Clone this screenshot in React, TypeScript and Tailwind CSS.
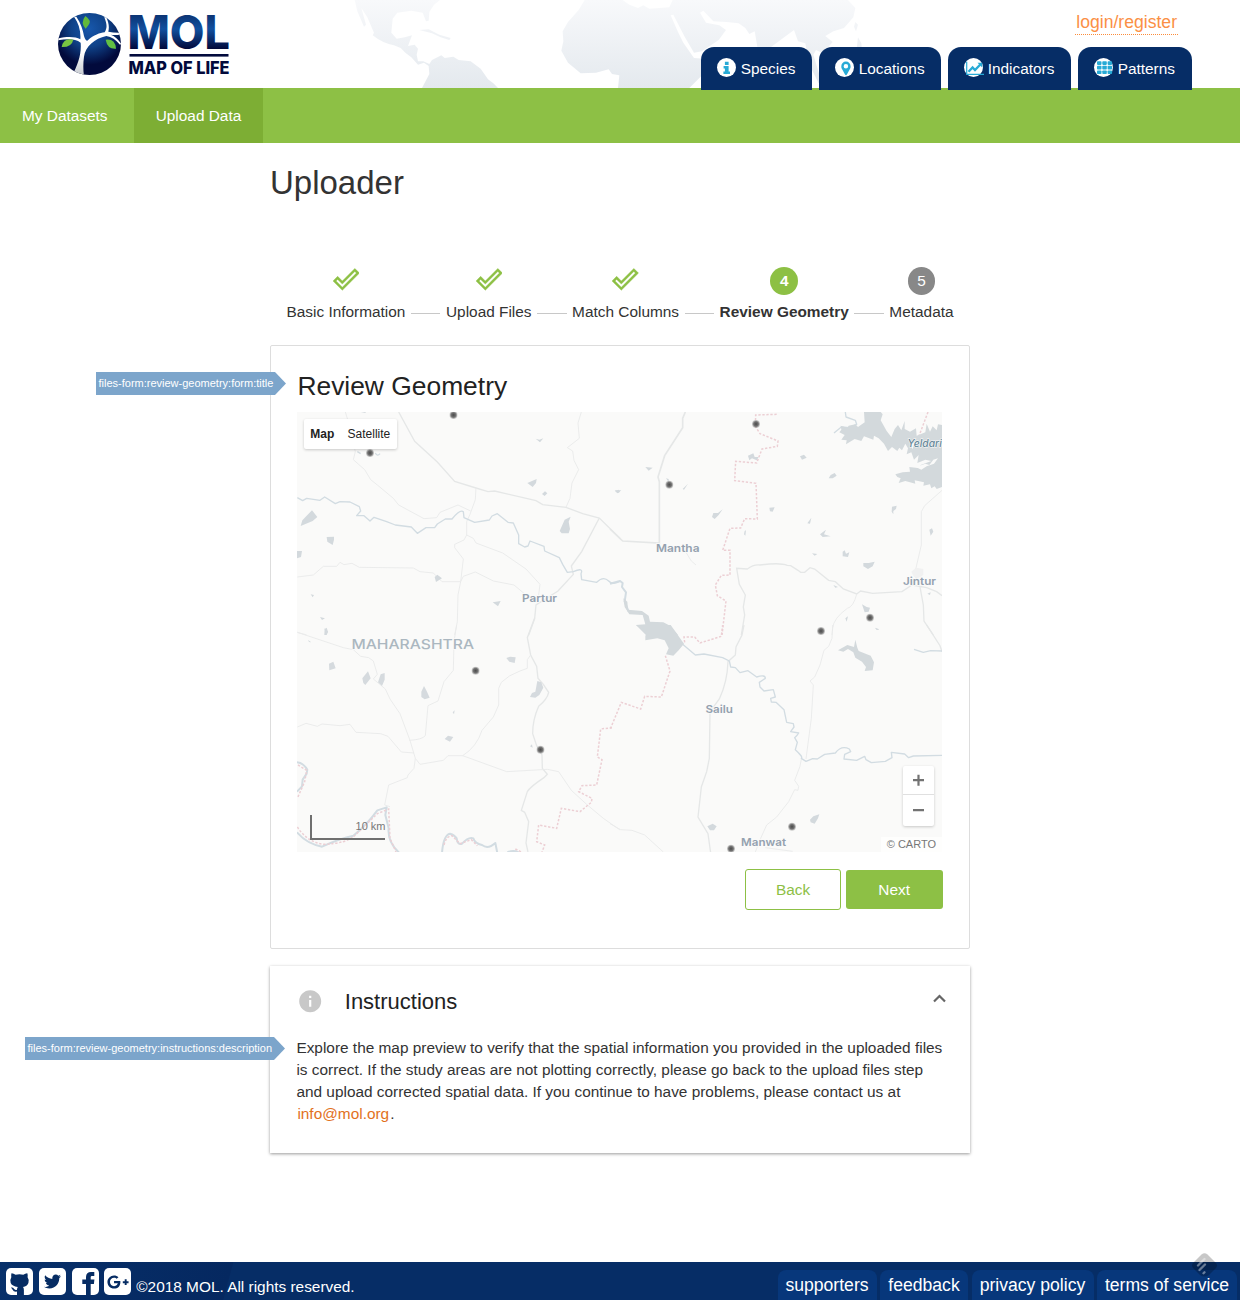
import React from "react";
import { FaTwitter, FaGooglePlusG } from "react-icons/fa";
import { MdInfo } from "react-icons/md";

function Logo() {
  return (
    <svg className="block h-[86px] w-[186px] overflow-visible" viewBox="54 0 186 86">
      <defs>
        <radialGradient id="globe" cx="0.5" cy="0.25" r="0.65">
          <stop offset="0" stopColor="#1757ab" />
          <stop offset="0.45" stopColor="#0f4288" />
          <stop offset="0.9" stopColor="#020a3c" />
        </radialGradient>
        <linearGradient id="letters" x1="0" y1="0" x2="0" y2="1">
          <stop offset="0.2" stopColor="#0c3474" />
          <stop offset="0.45" stopColor="#11509f" />
          <stop offset="0.8" stopColor="#020a3c" />
        </linearGradient>
        <linearGradient id="trunk" x1="0" y1="0" x2="0" y2="1">
          <stop offset="0.6" stopColor="#fff" />
          <stop offset="1" stopColor="#c4c8ce" />
        </linearGradient>
        <clipPath id="globeClip">
          <ellipse cx="89.5" cy="44" rx="31.5" ry="31" />
        </clipPath>
      </defs>
      <ellipse cx="89.5" cy="44" rx="31.5" ry="31" fill="url(#globe)" />
      <g clipPath="url(#globeClip)">
        <g transform="scale(.33333)">
          <path
            d="M217 226 C232 196 245 165 242 128 C226 116 202 116 172 121 L172 116 C202 109 226 110 241 118 C243 92 236 70 222 50 L229 50 C243 70 249 90 252 108 Q256 122 262 122 C282 104 300 99 314 97 C323 82 320 70 313 52 L318 50 C327 68 328 82 325 95 Q342 99 364 98 L364 103 Q344 106 332 104 Q350 110 364 132 L360 134 Q342 112 319 108 C284 115 256 140 252 170 Q248 200 252 228 Z"
            fill="url(#trunk)"
          />
          <path d="M257 86 Q240 68 256 48 Q277 62 265 76 Z" fill="#62b93b" />
          <path d="M185 141 Q190 112 220 119 Q215 142 185 141Z" fill="#78c442" />
          <path d="M348 146 Q322 148 317 119 Q346 115 348 146Z" fill="#62c043" />
        </g>
      </g>
      <text x="127.5" y="48.800" textLength="102.500" lengthAdjust="spacingAndGlyphs" fontFamily="Inter" fontWeight="800" fontSize="46.500" fill="url(#letters)">MOL</text>
      <rect x="129.500" y="54" width="99" height="2.600" fill="#020a3c" />
      <text x="128.500" y="73.800" textLength="101" lengthAdjust="spacingAndGlyphs" fontFamily="Inter" fontWeight="800" fontSize="17" fill="#020a3c">MAP OF LIFE</text>
    </svg>
  );
}

function WorldBackdrop() {
  return (
    <svg className="absolute left-[350px] top-0 h-[88px] w-[520px]" viewBox="0 0 1560 264">
      <defs>
        <linearGradient id="land" gradientUnits="userSpaceOnUse" x1="0" y1="0" x2="0" y2="264">
          <stop offset="0" stopColor="#f8f9fb" />
          <stop offset="1" stopColor="#e4e9ee" />
        </linearGradient>
      </defs>
      <g fill="url(#land)">
        <path d="M14 0 L22 34 L42 80 L48 74 L34 24 L52 52 L72 98 L68 106 Q98 130 132 136 L152 144 L166 158 L184 172 L204 194 L222 188 L236 198 L238 222 L216 264 L444 264 L430 250 L414 238 L392 206 L362 184 L326 180 L310 170 L284 174 L274 166 L246 180 L238 192 L220 184 L204 184 L200 164 L204 146 L194 134 L174 138 L186 106 L164 112 L140 116 L124 98 L128 56 L142 38 L184 32 L218 38 L228 64 L236 62 L238 36 L252 14 L270 0Z" />
        <path d="M208 90 L236 88 L268 104 L302 114 L298 120 L272 112 L246 100Z" />
        <path d="M704 0 L686 30 L654 66 L638 94 L640 124 L634 152 L654 188 L692 220 L738 218 L776 208 L786 222 L808 226 L804 264 L1018 264 L1060 222 L1064 176 L1032 174 L1000 128 L984 96 L962 46 L970 44 L1004 110 L1032 158 L1056 154 L1106 120 L1128 90 L1108 76 L1068 68 L1050 38 L1060 32 L1090 64 L1130 66 L1166 70 L1186 84 L1198 102 L1214 94 L1222 140 L1262 142 L1332 90 L1344 124 L1366 130 L1376 190 L1406 250 L1414 244 L1390 164 L1398 150 L1418 160 L1448 126 L1426 108 L1450 94 L1482 84 L1510 52 L1516 24 L1494 0 L968 0 L958 22 L898 26 L880 16 L864 24 L838 14 L818 0Z" />
        <path d="M1516 66 L1524 74 L1518 94 L1512 80Z M1524 112 L1534 130 L1536 150 L1520 146Z" />
      </g>
    </svg>
  );
}

const tabs = [
  { label: "Species", cls: "w-[111px]" },
  { label: "Locations", cls: "w-[122px]" },
  { label: "Indicators", cls: "w-[123px]" },
  { label: "Patterns", cls: "w-[114px]" },
];

function TabIcon({ kind }: { kind: string }) {
  return (
    <svg className="mr-[4.700px] block h-[20px] w-[19px] overflow-visible" viewBox="0 0 19 20">
      <circle cx="9.500" cy="9.500" r="9.500" fill="#fff" />
      {kind === "Species" && (
        <path fill="#27aad6" d="M7.900 3.700h3.700v3.200H7.900zM6.600 7.900h5v5.700h1.400v2.500H6.400v-2.500h1.500v-3.200H6.600z" />
      )}
      {kind === "Locations" && (
        <path
          fill="#27aad6"
          fillRule="evenodd"
          d="M10.900 3.600a4.700 4.700 0 0 1 4.700 4.800c0 1.200-.3 1.800-.7 2.600l-3 5.600q-.9 1.200-1.900 0l-3-5.600c-.4-.8-.7-1.400-.7-2.600a4.600 4.700 0 0 1 4.600-4.800zM10.900 6.100a2.200 2.200 0 1 0 0 4.500 2.200 2.200 0 1 0 0-4.500z"
        />
      )}
      {kind === "Indicators" && (
        <g fill="none" stroke="#27aad6">
          <path d="M2.700 3.700V16.400H20" strokeWidth="1.200" />
          <path d="M4.500 13.800L8.600 9.500L11 12L16.300 6.500" strokeWidth="2.300" />
          <path d="M13.500 4.700h4.700v4.700z" fill="#27aad6" stroke="none" />
        </g>
      )}
      {kind === "Patterns" && (
        <g fill="#27aad6">
          {[3.200, 7.800, 12.400].map((y) =>
            [3, 8.300, 13.600].map((x) => <rect key={`${x}-${y}`} x={x} y={y} width="4.500" height="3.700" rx=".8" />)
          )}
        </g>
      )}
    </svg>
  );
}

const steps = [
  { label: "Basic Information", state: "done" },
  { label: "Upload Files", state: "done" },
  { label: "Match Columns", state: "done" },
  { label: "Review Geometry", state: "current" },
  { label: "Metadata", state: "next" },
];

function CheckOutline() {
  return (
    <svg className="-mt-[.6px] block size-[26.500px] self-start" viewBox="0 0 24 24">
      <path
        fill="#8dc044"
        stroke="#8dc044"
        strokeWidth=".35"
        d="M19.780 2.200L24 6.440L8.440 22L0 13.550L4.220 9.330L8.440 13.550L19.780 2.200M19.780 5L8.440 16.360L4.220 12.190L2.810 13.550L8.440 19.170L21.170 6.440L19.780 5Z"
      />
    </svg>
  );
}

function Stepper() {
  return (
    <div className="mx-[11px] flex">
      {steps.map((s, i) => (
        <React.Fragment key={s.label}>
          {i > 0 && <div className="mt-[46px] h-px flex-1 bg-[#c8c8c8]" />}
          <div className="flex shrink-0 flex-col items-center px-[5.500px]">
            <div className="flex h-7 items-center justify-center">
              {s.state === "done" && <CheckOutline />}
              {s.state === "current" && (
                <div className="flex size-7 items-center justify-center rounded-full bg-[#8dc044] font-bold text-white">4</div>
              )}
              {s.state === "next" && (
                <div className="flex h-7 w-[27px] items-center justify-center rounded-full bg-[#888] text-white">5</div>
              )}
            </div>
            <div className={s.state === "current" ? "mt-[6px] font-bold leading-[22px]" : "mt-[6px] leading-[22px]"}>{s.label}</div>
          </div>
        </React.Fragment>
      ))}
    </div>
  );
}

const dots = [
  [453.500, 415], [370, 453], [756, 424], [669.300, 484.700], [821, 631], [870, 617.700], [475.600, 670.700], [540.500, 749.700], [792, 826.700], [731, 848.700],
];

const road = { stroke: "#e5e7e7", strokeWidth: 4, fill: "none" };
const lane = { stroke: "#e9ebeb", strokeWidth: 2.800, fill: "none" };
const river = { stroke: "#d2dce2", strokeWidth: 4, fill: "none", strokeLinejoin: "round" as const };
const border = { stroke: "#eccfd4", strokeWidth: 4.500, strokeDasharray: "7 5", fill: "none" };

function MapCanvas() {
  return (
    <svg className="block h-[440px] w-[645px]" viewBox="297 412 645 440">
      <defs>
        <radialGradient id="dot">
          <stop offset="0" stopColor="#4a4a4a" />
          <stop offset=".6" stopColor="#757575" />
          <stop offset="1" stopColor="#999" stopOpacity=".4" />
        </radialGradient>
      </defs>
      <rect x="297" y="412" width="645" height="440" fill="#fafaf9" />
      {/* north-west quadrant */}
      <g transform="translate(290 405) scale(.33333)">
        <path {...road} d="M326 21 L374 109 L442 171 L494 229 L558 249 L594 260 L614 258 L738 287 L758 299 L828 307 L878 326 L928 339 L992 402" />
        <path {...road} d="M928 339 L875 440 L844 483 L850 508 L804 558 L738 600 L734 640 L716 690" />
        <path {...lane} d="M166 21 L178 60 L196 140 L190 164 L224 194 L242 224 L262 240 L310 280 L326 300 L402 341 L440 338 L450 322 L504 300 L542 318 M874 21 L864 54 L868 100 L832 128 L848 138 L852 166 L866 194 L846 234 L840 280 L828 307 M558 249 L556 284 L540 328 L530 350 L530 390 M530 390 L550 400 L558 414 L638 444 L708 492 L750 538 L746 570 M530 390 L522 405 L494 418 L494 428 L520 462 L512 530 L504 570 L502 650 L494 690 M22 516 L70 510 L100 484 L140 484 L150 472 L162 479 L186 475 L208 487 L370 489 L390 500 L430 504 L456 530 L512 530 L520 514 L556 501 L610 528 L672 540 L720 580 M22 682 L50 690" />
        <path {...river} d="M22 278 L38 287 L50 280 L90 286 L104 276 L136 296 L150 290 L180 291 L208 305 L212 318 L200 332 L222 332 L240 348 L252 337 L290 350 L316 360 L364 366 L382 385 L408 368 L434 368 L442 357 L466 342 L486 342 Q510 312 520 320 L522 338 L554 352 L598 345 L606 333 L622 326 L654 352 L670 354 L686 390 L686 416 L704 426 L714 423 L720 408 L762 424 L764 438 L808 458 L818 478 L832 502 L850 500 Q882 486 873 506 L875 524 L920 532 Q940 512 956 528 Q968 542 992 528" />
        <g fill="#d3d9dd">
          <path d="M32 363 L37 346 L66 316 L82 336 L68 348Z M110 396 L132 395 L132 404 L128 420 L112 410Z M21 438 L36 438 L33 456 L21 460Z M737 101 L748 104 L760 100 L750 112Z M712 234 L740 222 L738 234 L728 246Z M756 267 L765 259 L772 265 L764 273Z M809 378 L824 344 L842 335 L836 350 L840 372 L836 385 L815 385Z M434 516 L442 509 L456 520 L438 531Z M608 592 L632 588 L624 604Z M975 258 L987 254 L990 261 L982 265Z M90 636 L105 640 L96 645Z M104 670 L114 680 L110 690 L103 690Z M62 568 L72 570 L68 577Z M208 20 L228 20 L226 24Z" />
        </g>
        <path d="M202 140 l10 6 M256 144 q6 12 14 2" stroke="#d3dce1" strokeWidth="4" fill="none" />
      </g>
      {/* north-east quadrant */}
      <g transform="translate(610 405) scale(.33333)">
        <path {...road} strokeWidth={5} d="M226 21 L218 40 L218 68 L164 152 L144 216 L148 230 L148 414 L38 408 L0 372" />
        <path {...lane} d="M228 442 L244 468 L258 480 M996 256 L944 302 L934 320 L934 420 L914 506 M740 568 Q730 606 712 610 Q670 640 668 670 L666 690" />
        <path {...road} d="M394 690 L404 630 L400 606 L406 570 L388 538 L380 490 L412 492 Q430 478 450 480 Q510 472 532 481 L542 482 L564 496 L572 502 L584 502 L600 488 L614 492 L656 526 L676 530 L700 552 L740 567 L752 558 L788 565 L876 560 L906 540 L950 548 L980 560 L996 572 M914 506 L930 546 L940 600 L942 648 L970 690" />
        <path d="M904 500 L918 488 L940 492 L940 510 L924 520 L912 516Z" fill="#f1f1f1" />
        <path {...border} d="M500 28 L437 30 L436 64 L450 86 L504 108 L502 124 L456 132 L440 174 L377 169 L374 227 L438 235 L442 342 L404 341 L392 369 L360 370 L338 436 L360 436 L360 510 L334 511 L316 540 L322 572 L348 588 L336 690 M954 21 L928 90 L932 120" />
        <path {...river} d="M706 21 L708 36 L736 46 L740 58 L718 68 L694 66 L672 84" />
        <path {...river} strokeWidth={6} d="M0 536 L30 528 L38 534 L36 546 L48 562 L44 590 L56 620" />
        <path fill="#d3d9dc" d="M40 580 L52 590 L54 614 L96 618 L116 632 L120 650 L160 652 L180 662 L204 690 L108 690 L78 660 L106 658 L98 630 L58 628 L44 606Z" />
        <path fill="#d3d9dc" d="M762 21 L764 52 L744 66 L736 58 L716 62 L712 68 L692 62 L694 74 L688 82 L704 90 L694 104 L710 106 L708 118 L734 102 L754 108 L762 94 L790 104 L792 92 L806 100 L822 116 L834 138 L846 126 L862 138 L868 128 L876 136 L886 116 L894 130 L890 148 L904 142 L912 164 L926 150 L922 174 L946 164 L964 168 L932 180 L930 190 L898 186 L900 200 L878 202 L856 208 L862 216 L872 220 L866 234 L886 228 L900 232 L916 236 L914 226 L942 232 L940 242 L960 238 L964 250 L974 244 L980 252 L996 246 L996 60 L984 58 L980 76 L968 64 L960 80 L950 56 L946 82 L920 92 L918 70 L900 80 L884 72 L884 48 L874 76 L864 60 L854 72 L844 96 L830 78 L820 60 L812 46 L818 28 L812 21Z" />
        <path fill="#fafaf9" d="M918 186 L946 176 L958 180 L970 164 L984 160 L972 176 L950 184 L934 194Z M900 120 L914 112 L908 132Z" />
        <g fill="#d3d9dd">
          <path d="M106 186 L128 188 L116 197Z M14 256 L34 256 L24 264Z M414 152 L430 145 L434 156 L446 156 L440 166 L426 160 L418 166Z M570 154 L582 149 L590 158 L576 164Z M656 220 L662 210 L674 204 L680 212 L668 220Z M306 336 L310 324 L324 324 L338 313 L326 330 L314 342Z M478 308 L494 307 L488 320 L480 319Z M592 355 L604 338 L600 356Z M630 388 L648 374 L642 388 L662 394 L638 396Z M846 305 L860 302 L858 312 L850 318 L850 328 L845 320Z M698 440 L704 436 L708 446 L718 442 L714 456 L698 454Z M760 474 L776 474 L794 470 L788 484 L774 492 L760 484Z M606 445 L622 447 L614 452Z M404 378 L408 376 L406 392 L402 388Z M958 374 L966 370 L970 380 L962 392Z M670 540 L684 546 L676 548Z M756 598 L770 606 L780 608 L776 620 L764 622Z M706 640 L714 634 L710 650Z M795 668 L808 673 L800 675Z M952 566 L962 562 L960 570Z M168 220 L176 222 L176 232Z M218 252 L234 236 L222 254Z" />
        </g>
      </g>
      {/* south-west quadrant */}
      <g transform="translate(290 625) scale(.33333)">
        <path {...road} d="M734 -20 L712 38 L722 90 L740 124 L744 160 Q760 176 776 202 Q772 222 746 244 Q728 284 728 326 L740 362 L756 390 L757 430 L772 448 L762 458 Q720 486 712 500 L694 556 L704 562 L716 590 L708 654 L714 681" />
        <path {...lane} d="M22 22 L160 68 L190 74 L212 94 L236 98 L250 108 L262 148 L250 162 L286 192 L300 222 L330 266 L360 346 L376 400 L372 430 L354 450 L352 458 L296 480 L284 540 L300 545 M358 346 Q396 344 406 332 L414 242 L444 228 L462 170 L490 136 L492 50 L500 0 M22 306 L48 295 L82 304 L96 297 L150 302 L180 298 L198 322 L272 326 L294 334 L334 381 L372 384 M376 400 L390 418 L460 406 L474 392 L518 392 Q560 366 576 316 L610 276 L626 240 L626 190 L634 172 Q656 150 690 138 L712 130 L712 104 L722 90 M518 392 L650 440 L772 433 L806 440 L844 496 L892 540 L940 580 L990 615" />
        <path {...border} d="M966 308 L932 312 L922 396 L936 404 L920 480 L876 482 L866 500 L906 520 L904 532 L870 560 L814 550 L800 610 L746 600 L740 650 L764 660 L756 681" />
        <path {...river} strokeWidth={6} d="M21 412 Q40 414 52 434 L50 446 L38 464 L36 484 L21 500 M21 622 Q50 656 96 665 Q150 640 190 632 Q230 600 262 556 L290 547 L286 570 L296 610 Q292 650 328 684 M456 684 Q460 630 480 626 Q494 630 500 640 Q502 660 516 656 Q536 634 550 640 Q554 656 576 660 Q594 674 616 654 L622 684 M652 682 Q670 674 686 682" />
        <path {...border} d="M24 420 L50 436 L44 470 L22 520 M22 606 Q50 650 100 658 Q170 656 196 630 L262 566 L296 552 L300 640 L318 681 M462 660 Q468 634 486 632 L510 656 L544 644 L562 662 M676 672 L694 681" />
        <g fill="#d5dade">
          <path d="M104 12 L110 8 L114 20 L108 30Z M54 45 L64 52 L57 51Z M117 116 L130 110 L137 130 L118 136Z M217 160 L234 139 L242 160 L226 180 L220 174Z M264 172 L272 148 L284 144 L284 164 L276 183Z M394 216 L394 200 L402 183 L410 198 L419 218 L404 223Z M649 99 L660 95 L677 97 L674 114 L658 110Z M720 216 L726 204 L736 200 L742 168 L754 172 L760 188 L748 210 L736 218Z M464 342 L474 332 L490 336 L480 350Z M488 262 L494 256 L492 268Z M720 364 L726 358 L728 368Z" />
        </g>
      </g>
      {/* south-east quadrant */}
      <g transform="translate(610 625) scale(.33333)">
        <path {...road} d="M402 0 L396 30 L378 66 L376 90 L354 110 Q352 170 328 222 L300 260 L298 400 L290 440 L274 486 L264 576 L294 626 L302 684" />
        <path {...road} d="M950 0 L990 62 L996 80" />
        <path {...lane} d="M668 0 L666 40 L656 64 L642 76 L630 120 L614 156 L600 168 L610 180 L604 280 L588 402 M574 402 L570 424 L554 466 L566 484 L564 496 L554 494 L536 530 L500 576 L470 600 L452 640 L436 681 M0 596 L32 614 L66 616 L104 630 L160 681 M466 668 L548 679" />
        <path {...river} d="M218 58 L256 90 L282 87 L338 98 L358 108 L362 126 L376 128 L390 143 L414 137 L440 156 Q466 148 466 160 L448 172 L450 186 L462 198 L490 194 L496 216 L482 220 L484 231 L498 232 L522 254 L530 292 L550 296 L552 306 L542 320 L566 324 L562 330 L554 338 L562 352 L556 374 Q580 396 574 400 L588 409 L608 401 L622 402 L644 388 L676 384 Q694 360 718 372 L722 380 L704 388 L702 402 L740 406 L764 394 L768 404 L784 413 L826 409 L846 398 L844 382 L884 387 L896 398 L910 393 L996 391 M912 73 L940 82 L962 77 L996 78" />
        <path {...border} d="M224 52 L222 36 L254 36 L270 54 L334 34 L338 0 M166 92 L180 138 L154 216 L104 214 L92 252 L34 232 L0 314" />
        <path fill="#d3d9dc" d="M78 0 L90 8 L116 18 L106 32 L106 46 L142 40 L164 46 L176 70 L168 88 L190 92 L206 76 L222 56 L206 34 L182 0Z" />
        <path fill="#d3d9dc" d="M684 76 L712 60 L732 66 L736 44 L742 68 L746 78 L782 92 L792 112 L788 136 L764 138 L768 126 L756 110 L736 98 L730 82 L714 72 L700 80Z" />
        <path fill="#d3d9dd" d="M292 604 L308 596 L320 604 L312 616 L300 616Z M600 584 L610 574 L628 568 L624 580 L614 596 L602 592Z M795 9 L808 14 L802 14Z" />
      </g>
      {dots.map(([x, y]) => (
        <circle key={`${x}-${y}`} cx={x} cy={y} r="4" fill="url(#dot)" />
      ))}
      <g fontFamily="Inter" fontWeight="600" fontSize="10.500" fill="#94a1af" stroke="#fafaf9" strokeWidth="1.500" paintOrder="stroke">
        <text x="656" y="552" textLength="43.500" lengthAdjust="spacingAndGlyphs">Mantha</text>
        <text x="522" y="602" textLength="35" lengthAdjust="spacingAndGlyphs">Partur</text>
        <text x="903" y="584.500" textLength="33" lengthAdjust="spacingAndGlyphs">Jintur</text>
        <text x="705.500" y="713.300" textLength="27.500" lengthAdjust="spacingAndGlyphs">Sailu</text>
        <text x="741" y="845.700" textLength="45" lengthAdjust="spacingAndGlyphs">Manwat</text>
        <text x="351.500" y="649" textLength="122.500" lengthAdjust="spacingAndGlyphs" fontWeight="500" fontSize="13.500" fill="#abb7c0">MAHARASHTRA</text>
        <text x="907.500" y="446.700" textLength="34.300" lengthAdjust="spacingAndGlyphs" fontStyle="italic" fontWeight="500" fontSize="10" fill="#66889a" strokeWidth="1">Yeldari</text>
      </g>
    </svg>
  );
}

function Hint({ text, cls }: { text: string; cls: string }) {
  return (
    <div className={`absolute z-10 flex h-[23px] text-[11px] leading-[23px] text-white ${cls}`}>
      <div className="flex-1 whitespace-nowrap bg-[#7ca5cb] pl-[2.500px]">{text}</div>
      <svg className="block h-[23px] w-[11px]" viewBox="0 0 11 23">
        <path d="M0 0L11 11.500L0 23Z" fill="#7ca5cb" />
      </svg>
    </div>
  );
}

function SocialIcon({ kind }: { kind: string }) {
  return (
    <div className="flex size-[27px] items-center justify-center overflow-hidden rounded-[5px] bg-white text-[#062c63]">
      {kind === "github" && (
        <svg className="size-[27px]" viewBox="0 0 27 27">
          <path
            fill="#062c63"
            d="M5.500 5.300 Q7.500 5.200 9.500 6.800 Q13.500 5.900 17.300 6.800 Q19.500 5.200 21.300 5.300 Q22.200 7.700 21.600 9.300 Q23.300 11.600 22.400 15.100 Q21.100 18.400 17 19 Q17.900 20 17.900 22 V27 H11 V23.600 Q7.800 24.200 6.600 21.800 Q6 20.300 4.800 19.700 Q6.900 19.200 8.200 21 Q9.300 22.500 11 21.800 Q11 20 11.800 19 Q6 18 4.700 15 Q3.800 11.600 5.300 9.300 Q4.800 7.500 5.500 5.300Z"
          />
        </svg>
      )}
      {kind === "twitter" && <FaTwitter className="size-[17px]" />}
      {kind === "facebook" && (
        <svg className="size-[27px]" viewBox="0 0 27 27">
          <path
            fill="#062c63"
            d="M14 27V15.900H10.300V11.600H14V9C14 5.800 16 4 19 4H22.300V8.100H20.200C19 8.100 18.700 8.600 18.700 9.600V11.600H22.400L21.900 15.900H18.700V27Z"
          />
        </svg>
      )}
      {kind === "google" && <FaGooglePlusG className="size-[22px]" />}
    </div>
  );
}

const footerLinks = [
  { label: "supporters", cls: "w-[99px]" },
  { label: "feedback", cls: "w-[88px]" },
  { label: "privacy policy", cls: "w-[122px]" },
  { label: "terms of service", cls: "w-[140px]" },
];

export default function App() {
  return (
    <div className="relative flex h-[1300px] w-[1240px] flex-col overflow-hidden bg-white font-['Liberation_Sans',Arial,sans-serif] text-[15.400px] text-[#333]">
      <header className="relative flex h-[88px] shrink-0 justify-between pl-[54px] pr-[48px]">
        <WorldBackdrop />
        <div className="relative"><Logo /></div>
        <div className="relative z-10 flex flex-col items-end">
          <a className="mr-[14px] mt-[10px] block h-[25px] border-b border-dotted border-[#fb8c3a] px-px text-[17.600px] leading-[24px] text-[#fb9045]">login/register</a>
          <div className="mt-[12px] flex gap-[7px]">
            {tabs.map((t) => (
              <div key={t.label} className={`flex h-[43px] items-center rounded-t-[13px] bg-[#062d66] pl-4 text-white ${t.cls}`}>
                <div className="-mt-px"><TabIcon kind={t.label} /></div>
                <span>{t.label}</span>
              </div>
            ))}
          </div>
        </div>
      </header>
      <nav className="flex h-[55px] shrink-0 bg-[#8dc045] leading-[55px] text-white">
        <div className="w-[134px] pl-[22px]">My Datasets</div>
        <div className="w-[129px] bg-[#7dae34] pl-[21.700px]">Upload Data</div>
      </nav>

      <main className="ml-[270px] w-[700px] flex-1">
        <h1 className="mt-[20px] text-[33px] leading-[40px]">Uploader</h1>
        <div className="mt-[64px]"><Stepper /></div>

        <section className="relative mt-[22px] h-[604px] rounded-[2px] border border-[#ddd] px-[26px] pt-[24px]">
          <Hint text="files-form:review-geometry:form:title" cls="-left-[175px] top-[26px] w-[190px]" />
          <h2 className="pl-[.4px] text-[26.400px] leading-[32px] text-[#222]">Review Geometry</h2>
          <div className="relative mt-[10px] h-[440px] w-[645px] overflow-hidden">
            <MapCanvas />
            <div className="absolute left-[7px] top-[7px] flex h-[30px] w-[93px] items-center rounded-[2px] bg-white pl-[6.300px] text-[12px] text-[#222] shadow-[0_1px_3px_rgba(0,0,0,0.2)]">
              <span className="w-[37.300px] font-bold">Map</span>
              <span>Satellite</span>
            </div>
            <div className="absolute left-[13px] top-[403px] h-[25px] w-[75px] border-b-2 border-l-2 border-[#6f6f6f] text-right text-[11px] leading-[22px] text-[#777]">
              <span className="-mr-[.5px]">10 km</span>
            </div>
            <div className="absolute left-[606px] top-[354px] h-[60px] w-[31px] rounded-[2px] bg-white shadow-[0_1px_3px_rgba(0,0,0,0.2)]">
              <svg className="block h-[60px] w-[31px]" viewBox="0 0 31 60">
                <path d="M10 14.200h11M15.500 8.700v11M10 44.200h11" stroke="#737373" strokeWidth="2.200" />
                <path d="M0 28.500h31" stroke="#e0e0e0" />
              </svg>
            </div>
            <div className="absolute bottom-0 right-0 h-[15px] bg-white/70 pl-[6px] pr-[6px] text-[11px] leading-[15px] text-[#777]">© CARTO</div>
          </div>
          <div className="mt-[17px] flex items-center justify-end gap-[5px]">
            <button className="h-[41px] w-[96px] rounded-[3px] border border-[#8dc045] text-[#8dc045]">Back</button>
            <button className="h-[39px] w-[97px] rounded-[3px] bg-[#8dc045] pr-[.8px] text-white">Next</button>
          </div>
        </section>

        <section className="relative mt-[17px] h-[187px] bg-white pl-[26.400px] pt-[22px] shadow-[0_1px_3px_rgba(0,0,0,0.4)]">
          <Hint text="files-form:review-geometry:instructions:description" cls="-left-[245px] top-[71px] w-[260px]" />
          <div className="flex h-[26px] items-center">
            <MdInfo className="ml-[.4px] size-[26.400px] text-[#c8c8c8]" />
            <h3 className="ml-[21.600px] mt-[2px] flex-1 text-[22px] leading-[26px] text-[#222]">Instructions</h3>
            <svg className="mr-[23px] mt-[-7px] h-[10px] w-[15px]" viewBox="0 0 15 10">
              <path d="M2 8.500L7.500 3L13 8.500" fill="none" stroke="#666" strokeWidth="2.200" />
            </svg>
          </div>
          <p className="mt-[23px] whitespace-nowrap leading-[22px]">
            Explore the map preview to verify that the spatial information you provided in the uploaded files<br />
            is correct. If the study areas are not plotting correctly, please go back to the upload files step<br />
            and upload corrected spatial data. If you continue to have problems, please contact us at<br />
            <a className="px-px text-[#e2711d]">info@mol.org</a>.
          </p>
        </section>
      </main>

      <footer className="relative flex h-[38px] shrink-0 justify-between bg-[#062d66] bg-[linear-gradient(105deg,#07306a_0,#052860_225px,#062d66_226px)] pl-[6.200px] pr-[3px] text-white">
        <div className="flex pt-[6px]">
          <div className="flex gap-[5.700px]">
            {["github", "twitter", "facebook", "google"].map((k) => <SocialIcon key={k} kind={k} />)}
          </div>
          <div className="ml-[5px] mt-[9px] leading-[20px]">©2018 MOL. All rights reserved.</div>
        </div>
        <div className="flex gap-[3.500px] pt-[8px] text-[17.600px]">
          {footerLinks.map((l) => (
            <div key={l.label} className={`h-[30px] rounded-t-[8px] bg-[#07377b] text-center leading-[30px] ${l.cls}`}>{l.label}</div>
          ))}
        </div>
        <svg className="absolute -top-[9px] right-[22px] h-[25px] w-[27px]" viewBox="0 0 27 25">
          <path d="M10.500 1.500Q13.500 -1 16.500 1.500L25 10Q27 12.500 25 15L18 22Q16.500 23.500 13.500 23.500Q10.500 23.500 9 22L2 15Q0 12.500 2 10Z" fill="#000" fillOpacity=".22" />
          <path d="M7 12.500L13.500 6M8.500 17L14 11.500M12.500 20.200L13.500 19.200" stroke="#fff" strokeOpacity=".4" strokeWidth="2.300" strokeLinecap="round" />
        </svg>
      </footer>
    </div>
  );
}
